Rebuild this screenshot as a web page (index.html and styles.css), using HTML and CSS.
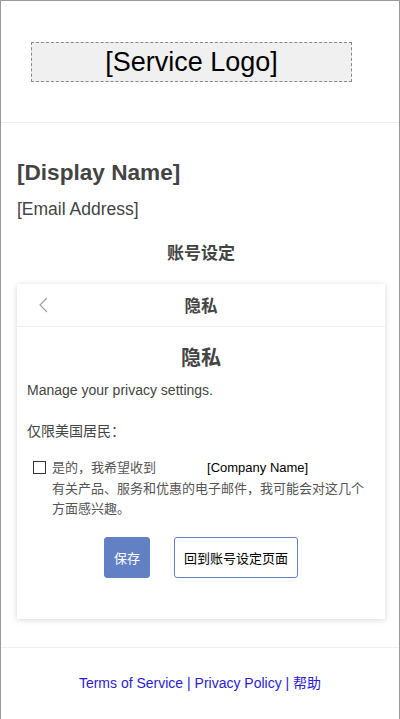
FILE: index.html
```html
<!DOCTYPE html>
<html lang="zh">
<head>
<meta charset="utf-8">
<title>隐私</title>
<link rel="stylesheet" href="styles.css">
</head>
<body>
<div class="page">
  <header class="top">
    <div class="logo">[Service Logo]</div>
  </header>
  <main class="main">
    <h1 class="name">[Display Name]</h1>
    <div class="email">[Email Address]</div>
    <div class="section-title">账号设定</div>
    <section class="card">
      <div class="card-head">
        <svg class="back" width="10" height="16" viewBox="0 0 10 16"><polyline points="8,1 1,8 8,15" fill="none" stroke="#a0a0a0" stroke-width="1.2"/></svg>
        <div class="card-title">隐私</div>
      </div>
      <div class="card-body">
        <h2 class="heading">隐私</h2>
        <p class="desc">Manage your privacy settings.</p>
        <p class="note">仅限美国居民：</p>
        <div class="opt">
          <span class="box"></span>
          <div class="opt-text">是的，我希望收到<span class="company">[Company Name]</span><br>有关产品、服务和优惠的电子邮件，我可能会对这几个方面感兴趣。</div>
        </div>
        <div class="actions">
          <button class="btn save">保存</button>
          <button class="btn back-btn">回到账号设定页面</button>
        </div>
      </div>
    </section>
  </main>
  <footer class="foot">
    <a href="#">Terms of Service</a> | <a href="#">Privacy Policy</a> | <a href="#">帮助</a>
  </footer>
</div>
</body>
</html>
```
FILE: styles.css
```css
html, body {
  margin: 0;
  padding: 0;
  background: #fff;
}
body {
  font-family: "Liberation Sans", Arial, "Noto Sans CJK SC", sans-serif;
  color: #444;
}
.page {
  width: 400px;
  min-height: 760px;
  box-sizing: border-box;
  border: 1px solid #999;
  border-bottom: none;
}
.top {
  padding: 41px 0 40px 30px;
  border-bottom: 1px solid #eee;
}
.logo {
  width: 321px;
  height: 40px;
  box-sizing: border-box;
  border: 1px dashed #888;
  background: #f0f0f0;
  color: #000;
  font-size: 27px;
  line-height: 38px;
  text-align: center;
}
.main {
  padding: 0 14px 0 16px;
}
.name {
  margin: 36px 0 0;
  font-size: 22.6px;
  line-height: 28px;
  font-weight: bold;
  color: #444;
}
.email {
  margin-top: 12px;
  font-size: 17.5px;
  line-height: 20px;
}
.section-title {
  margin-top: 25px;
  text-align: center;
  font-size: 17px;
  font-weight: bold;
  line-height: 20px;
}
.card {
  margin-top: 20px;
  background: #fff;
  box-shadow: 0 1px 6px rgba(0, 0, 0, 0.16);
}
.card-head {
  position: relative;
  height: 42px;
  border-bottom: 1px solid #eee;
  display: flex;
  align-items: center;
  justify-content: center;
}
.back {
  position: absolute;
  left: 22px;
  top: 13px;
}
.card-title {
  font-size: 16.5px;
  font-weight: bold;
}
.card-body {
  padding: 19px 10px 41px;
}
.heading {
  margin: 0;
  text-align: center;
  font-size: 20px;
  line-height: 24px;
  font-weight: bold;
}
.desc {
  margin: 11px 0 0;
  font-size: 14px;
  line-height: 18px;
}
.note {
  margin: 23px 0 0;
  font-size: 14px;
  line-height: 18px;
}
.opt {
  margin-top: 18px;
  display: flex;
  align-items: flex-start;
}
.box {
  flex: none;
  width: 13px;
  height: 13px;
  box-sizing: border-box;
  border: 1px solid #333;
  margin: 3px 6px 0 6px;
}
.opt-text {
  font-size: 13px;
  line-height: 20.5px;
  color: #555;
}
.company {
  margin-left: 51px;
  color: #000;
  font-size: 13px;
}
.actions {
  margin-top: 17px;
  display: flex;
  justify-content: center;
  gap: 24px;
}
.btn {
  height: 41px;
  padding: 0 9px;
  border-radius: 3px;
  font-family: "Liberation Sans", Arial, "Noto Sans CJK SC", sans-serif;
  font-size: 13px;
  cursor: pointer;
}
.save {
  background: #6281c5;
  border: 1px solid #6281c5;
  color: #fff;
}
.back-btn {
  background: #fff;
  border: 1px solid #6281c5;
  color: #000;
}
.foot {
  margin-top: 28px;
  border-top: 1px solid #eee;
  padding-top: 26px;
  text-align: center;
  font-size: 14px;
  line-height: 18px;
  color: #2b1bd3;
}
.foot a {
  color: #2b1bd3;
  text-decoration: none;
}
```
